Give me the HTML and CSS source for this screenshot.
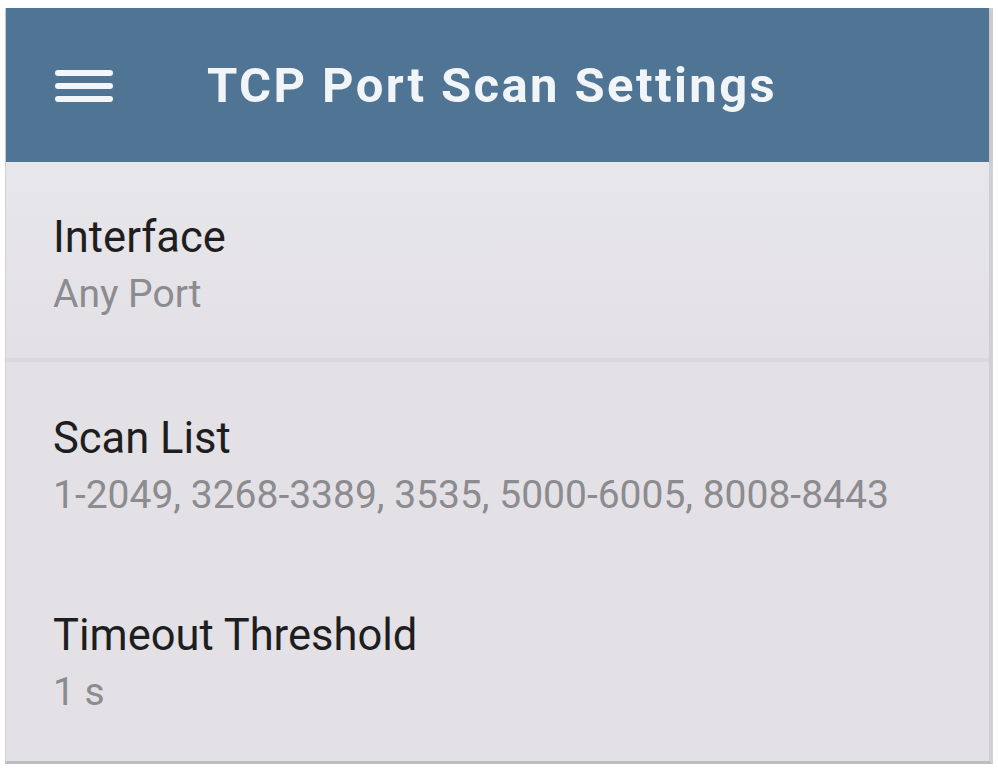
FILE: index.html
```html
<!DOCTYPE html>
<html lang="en">
<head>
    <meta charset="UTF-8">
    <title>TCP Port Scan Settings</title>
    <link rel="stylesheet" href="styles.css">
</head>
<body>
    <div class="screen">
        <header class="toolbar">
            <svg class="menu-icon" viewBox="0 0 58 32" width="58" height="32">
                <rect x="0" y="0" width="58" height="6" rx="3" fill="#f2f6fa"/>
                <rect x="0" y="13" width="58" height="6" rx="3" fill="#f2f6fa"/>
                <rect x="0" y="26" width="58" height="6" rx="3" fill="#f2f6fa"/>
            </svg>
            <h1>TCP Port Scan Settings</h1>
        </header>

        <div class="settings">
            <div class="setting first">
                <div class="setting-title">Interface</div>
                <div class="setting-value">Any Port</div>
            </div>
            <div class="setting">
                <div class="setting-title">Scan List</div>
                <div class="setting-value">1-2049, 3268-3389, 3535, 5000-6005, 8008-8443</div>
            </div>
            <div class="setting">
                <div class="setting-title">Timeout Threshold</div>
                <div class="setting-value">1 s</div>
            </div>
        </div>
    </div>
</body>
</html>
```

FILE: styles.css
```css
body {
    margin: 0;
    padding: 8px 5px 4px 5px;
    background: #ffffff;
    font-family: Roboto, 'Liberation Sans', sans-serif;
}

.screen {
    height: 756px;
    background: #e3e1e6;
    border-bottom: 3px solid #bdbcc0;
    border-left: 1px solid #d2d1d5;
    border-right: 4px solid #d0cfd3;
    box-sizing: border-box;
}

.toolbar {
    height: 154px;
    background: #4f7494;
    display: flex;
    align-items: center;
    padding-left: 49px;
    box-shadow: 0 2px 4px rgba(0, 0, 0, 0.12);
}

.menu-icon {
    margin-right: 94px;
    margin-top: 2px;
}

.toolbar h1 {
    margin: 0;
    color: #f1f5f8;
    font-size: 49px;
    font-weight: 700;
    letter-spacing: 2.4px;
}

.settings {
    padding: 0 47px;
}

.setting {
    padding-top: 51px;
    height: 197px;
    box-sizing: border-box;
}

.setting.first {
    padding-top: 50px;
    height: 200px;
    margin: 0 -47px;
    padding-left: 47px;
    padding-right: 47px;
    border-bottom: 4px solid #dbd9de;
    background: linear-gradient(#e7e6ea, #e3e1e6);
}

.setting-title {
    font-size: 43.5px;
    color: #1e1e20;
    line-height: 52px;
}

.setting-value {
    font-size: 39px;
    color: #8c8b8f;
    line-height: 60px;
}
```
